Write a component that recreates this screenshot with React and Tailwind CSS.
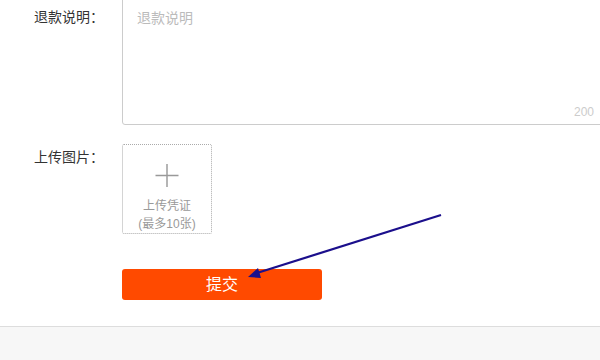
import React from 'react';

const font = { fontFamily: '"Liberation Sans", "Noto Sans CJK SC", sans-serif' };

// 标注箭头（覆盖在页面上）
const Arrow = () => (
  <svg className="absolute left-0 top-0 pointer-events-none" width="600" height="360" viewBox="0 0 600 360">
    <line x1="441" y1="215" x2="257" y2="273" stroke="#1b0f8c" strokeWidth="2.2" />
    <polygon points="248,277 258,268 261,278" fill="#1b0f8c" />
  </svg>
);

export default function App() {
  return (
    <div className="relative w-[600px] h-[360px] overflow-hidden bg-white flex flex-col" style={font}>
      <div className="flex-1">
        {/* 退款说明 */}
        <div className="flex -mt-[10px]">
          <div className="w-[104px] shrink-0 pt-[17px] text-right text-[14px] text-[#333] leading-[20px]">退款说明：</div>
          <div className="relative ml-[18px] w-[484px] h-[135px] shrink-0 border border-[#ccc] rounded-[3px]">
            <div className="px-[14px] pt-[17px] text-[14px] leading-[20px] text-[#bbb]">退款说明</div>
            <span className="absolute right-[11px] bottom-[3px] text-[12px] text-[#ccc]">200</span>
          </div>
        </div>

        {/* 上传图片 */}
        <div className="flex mt-[19px]">
          <div className="w-[104px] shrink-0 pt-[3px] text-right text-[14px] text-[#333] leading-[20px]">上传图片：</div>
          <div className="ml-[18px] w-[90px] h-[90px] border border-dotted border-[#aaa] rounded-[2px] flex flex-col items-center">
            <svg className="mt-[19px]" width="24" height="24" viewBox="0 0 24 24">
              <path d="M12 0v24M0 12h24" stroke="#999" strokeWidth="1.5" />
            </svg>
            <div className="mt-[10px] text-[12px] leading-[18px] text-[#999]">上传凭证</div>
            <div className="text-[12px] leading-[18px] text-[#999]">(最多10张)</div>
          </div>
        </div>

        {/* 提交 */}
        <div className="flex mt-[35px]">
          <div className="w-[122px] shrink-0" />
          <button className="w-[200px] h-[31px] bg-[#ff4a00] rounded-[3px] text-white text-[16px] leading-[31px]">提交</button>
        </div>
      </div>

      <div className="h-[34px] border-t border-[#ddd] bg-[#f7f7f7]" />
      <Arrow />
    </div>
  );
}
